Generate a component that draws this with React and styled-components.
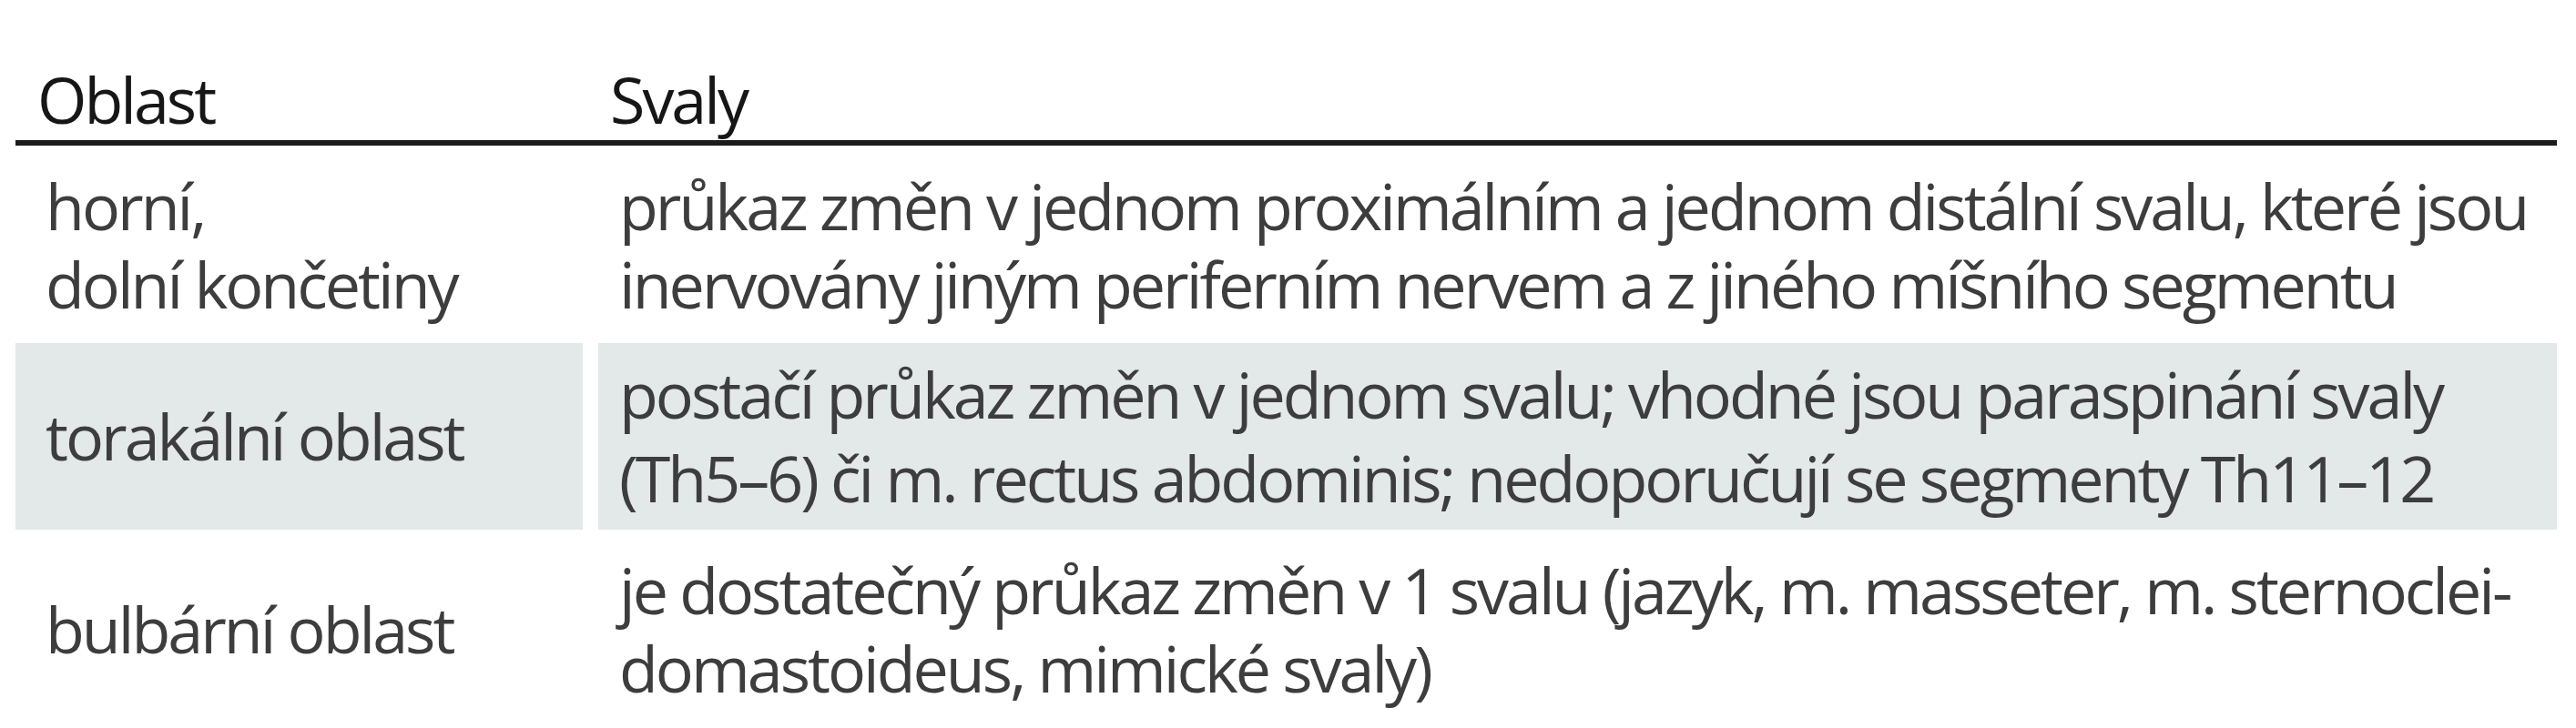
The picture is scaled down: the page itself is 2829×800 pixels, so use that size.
import React from 'react';
import styled, { createGlobalStyle } from 'styled-components';

const GlobalStyle = createGlobalStyle`
  body {
    margin: 0;
    background: #ffffff;
  }
`;

const Sheet = styled.div`
  margin-left: 17px;
  width: 2791px;
  font-family: "Open Sans", "Noto Sans", sans-serif;
  font-size: 70px;
  letter-spacing: -3px;
  line-height: 86px;
  color: #3d3d3d;
`;

const HeadRow = styled.div`
  display: grid;
  grid-template-columns: 623px 1fr;
  column-gap: 17px;
  padding: 66px 0 2px;
  border-bottom: 6px solid #1a1a1a;
  color: #161616;
`;

const HeadCell = styled.div`
  padding-left: ${props => props.$indent}px;
  white-space: nowrap;
`;

const Row = styled.div`
  display: grid;
  grid-template-columns: 623px 1fr;
  column-gap: 17px;
`;

const Cell = styled.div`
  display: flex;
  align-items: center;
  white-space: nowrap;
  background: ${props => (props.$shaded ? '#e3e8e8' : 'transparent')};
  padding: ${props => (props.$shaded ? '10px 0 11px' : '23px 0 22px')};
  padding-left: ${props => props.$indent}px;
  line-height: ${props => (props.$shaded ? 92 : 86)}px;
`;

const rows = [
  {
    area: ['horní,', 'dolní končetiny'],
    muscles: [
      'průkaz změn v jednom proximálním a jednom distální svalu, které jsou',
      'inervovány jiným periferním nervem a z jiného míšního segmentu',
    ],
  },
  {
    area: ['torakální oblast'],
    muscles: [
      'postačí průkaz změn v jednom svalu; vhodné jsou paraspinání svaly',
      '(Th5–6) či m. rectus abdominis; nedoporučují se segmenty Th11–12',
    ],
    shaded: true,
  },
  {
    area: ['bulbární oblast'],
    muscles: [
      'je dostatečný průkaz změn v 1 svalu (jazyk, m. masseter, m. sternoclei-',
      'domastoideus, mimické svaly)',
    ],
  },
];

const Lines = ({ lines }) => (
  <div>
    {lines.map((line, i) => (
      <React.Fragment key={i}>
        {i > 0 && <br />}
        {line}
      </React.Fragment>
    ))}
  </div>
);

const App = () => (
  <>
    <GlobalStyle />
    <Sheet>
      <HeadRow>
        <HeadCell $indent={24}>Oblast</HeadCell>
        <HeadCell $indent={13}>Svaly</HeadCell>
      </HeadRow>
      {rows.map((row, i) => (
        <Row key={i}>
          <Cell $shaded={row.shaded} $indent={33}>
            <Lines lines={row.area} />
          </Cell>
          <Cell $shaded={row.shaded} $indent={23}>
            <Lines lines={row.muscles} />
          </Cell>
        </Row>
      ))}
    </Sheet>
  </>
);

export default App;
